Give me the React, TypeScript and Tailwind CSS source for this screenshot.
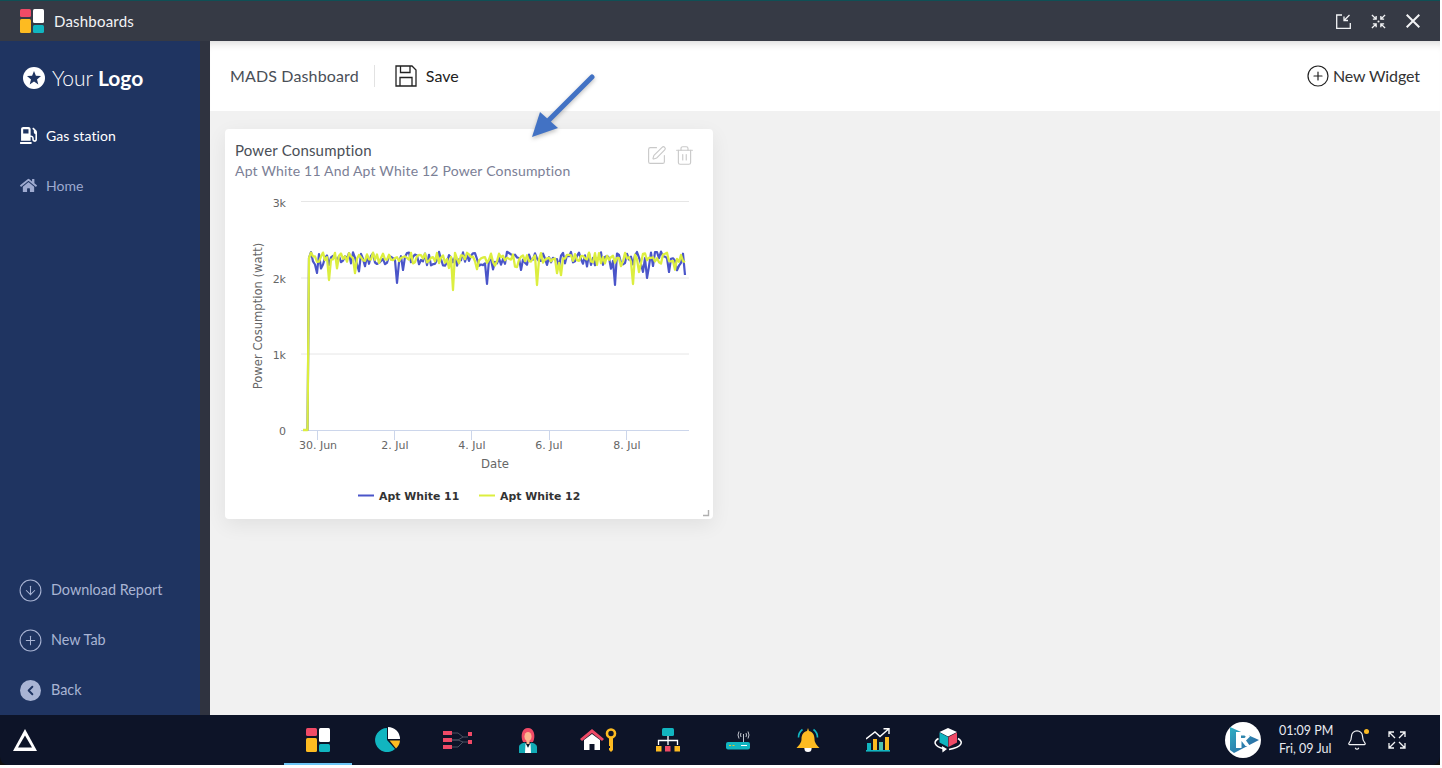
import React from 'react';
import { CircleArrowDown, CirclePlus, ChevronLeft, SquarePen, Trash2, Bell } from 'lucide-react';
import { FaGasPump, FaHome } from 'react-icons/fa';

// seeded noise so the series stay the same on every load
const makeSeries = (seed: number, base: number, spread: number, dips: number[][]) => {
    let s = seed;
    const rnd = () => {
        s = (s * 16807) % 2147483647;
        return s / 2147483647;
    };
    const pts: number[][] = [[303, 430], [307.5, 430], [309, 258]];
    for (let x = 311; x < 686; x += 2) {
        let y = base + (rnd() - 0.5) * spread;
        if (rnd() > 0.86) y += rnd() * 10;
        for (const d of dips) {
            if (d[0] - x >= 0 && d[0] - x < 2) y = d[1];
        }
        pts.push([x, y]);
    }
    return pts.map((p) => p[0].toFixed(1) + ',' + p[1].toFixed(1)).join(' ');
};

const blue = makeSeries(4711, 259, 15, [[317, 273], [398, 283], [404, 270], [488, 284], [616, 285], [647, 278], [685, 275], [521, 270], [669, 272]]);
const yellow = makeSeries(911, 258, 11, [[330, 280], [355, 273], [454, 290], [537, 285], [561, 275], [633, 284], [450, 268], [640, 272]]);

const DashIcon = () => (
    <svg width="24" height="24" viewBox="0 0 24 24">
        <rect x="0" y="0" width="11" height="8" rx="1.5" fill="#ef4a66" />
        <rect x="0" y="10" width="11" height="14" rx="1.5" fill="#fdbb21" />
        <rect x="13" y="0" width="11" height="14" rx="1.5" fill="#ffffff" />
        <rect x="13" y="16" width="11" height="8" rx="1.5" fill="#11b5c0" />
    </svg>
);

const PieIcon = () => (
    <svg width="26" height="26" viewBox="0 0 26 26">
        <path d="M12 1 A12 12 0 1 0 20 22 L12 13 Z" fill="#11b5c0" />
        <path d="M13 0 A12 12 0 0 1 25 12 L13 12 Z" fill="#ffffff" />
        <path d="M14.5 13.5 L25 13.5 A12 12 0 0 1 21 21.5 Z" fill="#fdbb21" />
    </svg>
);

const FlowIcon = () => (
    <svg width="30" height="18" viewBox="0 0 30 18">
        <path d="M9 2 H15 L20 6 H25 M9 9 H15 L20 6 M9 9 H15 L20 11 H25 M9 16 H15 L20 11" fill="none" stroke="#4b5060" strokeWidth="1" />
        <rect x="0" y="0" width="9" height="4" fill="#ef4a66" />
        <rect x="0" y="7" width="9" height="4" fill="#ef4a66" />
        <rect x="0" y="14" width="9" height="4" fill="#ef4a66" />
        <rect x="25" y="1" width="4" height="4" fill="#ef4a66" />
        <rect x="25" y="9" width="4" height="4" fill="#ef4a66" />
    </svg>
);

const PersonIcon = () => (
    <svg width="18" height="25" viewBox="0 0 18 25">
        <path d="M4 14 C1 8 3 0 9 0 C15 0 17 8 14 14 Z" fill="#ef4a66" />
        <ellipse cx="9" cy="8.5" rx="3.6" ry="4.6" fill="#fbb58f" />
        <rect x="7.5" y="11" width="3" height="5" fill="#fbb58f" />
        <path d="M0 25 V19 C0 16 4 15 6 14.5 L9 20 L12 14.5 C14 15 18 16 18 19 V25 Z" fill="#11aab5" />
        <path d="M6.5 15 L9 20 L11.5 15 L12 25 H6 Z" fill="#ffffff" />
    </svg>
);

const HouseKeyIcon = () => (
    <svg width="37" height="24" viewBox="0 0 37 24">
        <path d="M0 11 L12 1 L24 11 L22 13 L12 5 L2 13 Z" fill="#ef4a66" />
        <path d="M4 12 L12 6 L20 12 V22 H14.5 V16 H9.5 V22 H4 Z" fill="#ffffff" />
        <path d="M33 9 V22 L31 24 L29 22 V20 H30 V18 H29 V9 Z" fill="#fdbb21" />
        <circle cx="31" cy="5.5" r="4" fill="none" stroke="#fdbb21" strokeWidth="2.6" />
    </svg>
);

const TreeIcon = () => (
    <svg width="24" height="24" viewBox="0 0 24 24">
        <rect x="6" y="0" width="12" height="8" rx="1.5" fill="#11b5c0" />
        <path d="M12 8 V12 M2.5 17 V12.5 H21.5 V17 M12 12 V17" fill="none" stroke="#ffffff" strokeWidth="1.3" />
        <rect x="0" y="18" width="5.5" height="5.5" fill="#fdbb21" />
        <rect x="9" y="18" width="5.5" height="5.5" fill="#ef4a66" />
        <rect x="18.5" y="18" width="5.5" height="5.5" fill="#fdbb21" />
    </svg>
);

const RouterIcon = () => (
    <svg width="24" height="19" viewBox="0 0 24 19">
        <path d="M17.5 3 V11 M13 0.5 Q11 4 13 7.5 M15 2 Q14 4 15 6 M20 2 Q21 4 20 6 M22 0.5 Q24 4 22 7.5" fill="none" stroke="#d5d8e0" strokeWidth="0.9" />
        <rect x="0" y="11" width="24" height="7.5" rx="2" fill="#11b5c0" />
        <rect x="3" y="14" width="2" height="1" fill="#fdbb21" />
        <rect x="6.5" y="14" width="2" height="1" fill="#fdbb21" />
        <rect x="15" y="14" width="6" height="1" fill="#ffffff" />
    </svg>
);

const BellColorIcon = () => (
    <svg width="24" height="25" viewBox="0 0 24 25">
        <circle cx="12" cy="20.5" r="3.6" fill="#ffffff" />
        <path d="M12 0 L13 3 C17.5 4 18.5 8 18.5 11 C18.5 15 21 17 23.5 20 H0.5 C3 17 5.5 15 5.5 11 C5.5 8 6.5 4 11 3 Z" fill="#fdbb21" />
        <path d="M2.5 9.5 Q2.5 4.5 6.5 1.5 M21.5 9.5 Q21.5 4.5 17.5 1.5" fill="none" stroke="#11b5c0" strokeWidth="1.6" />
    </svg>
);

const ChartIcon = () => (
    <svg width="24" height="24" viewBox="0 0 24 24">
        <path d="M0 11 L9 4 L14 8.5 L22 1.5 M17.5 0.7 H23 V6" fill="none" stroke="#ffffff" strokeWidth="1.4" />
        <rect x="1" y="15" width="4" height="7" fill="#11b5c0" />
        <rect x="7" y="11" width="4" height="11" fill="#fdbb21" />
        <rect x="13" y="14" width="4" height="8" fill="#4fc3b0" />
        <rect x="19" y="9" width="4" height="13" fill="#fdbb21" />
        <rect x="0" y="22" width="24" height="1.6" fill="#11b5c0" />
    </svg>
);

const CubeIcon = () => (
    <svg width="29" height="25" viewBox="0 0 29 25">
        <path d="M14 0 L23 4 L14 8.5 L5.5 4 Z" fill="#ffffff" />
        <path d="M5.5 4.5 L14 9 V19 L5.5 14.5 Z" fill="#11b5c0" />
        <path d="M23 4.5 L14.5 9 V19 L23 14.5 Z" fill="#ef4a66" />
        <path d="M4.5 10.5 C-1 13.5 0 18 9 20.5 M24 10.5 C30 14 28 19 15 21.5" fill="none" stroke="#ffffff" strokeWidth="1.5" />
        <path d="M8 18 L13 21 L8.5 24.5 Z" fill="#ffffff" />
    </svg>
);

const dockIcons = [
    <DashIcon key="a" />,
    <PieIcon key="b" />,
    <FlowIcon key="c" />,
    <PersonIcon key="d" />,
    <HouseKeyIcon key="e" />,
    <TreeIcon key="f" />,
    <RouterIcon key="g" />,
    <BellColorIcon key="h" />,
    <ChartIcon key="i" />,
    <CubeIcon key="j" />,
];

const Chart = () => (
    <svg width="488" height="340" viewBox="225 179 488 340" className="block">
        {[201.5, 278, 354].map((y) => (
            <line key={y} x1="301" x2="689" y1={y} y2={y} stroke="#e6e6e6" />
        ))}
        <line x1="301" x2="689" y1="430.5" y2="430.5" stroke="#ccd6eb" />
        {[317.5, 394.5, 471.5, 549.5, 626.5].map((x) => (
            <line key={x} x1={x} x2={x} y1="431" y2="440" stroke="#ccd6eb" />
        ))}
        <polyline points={blue} fill="none" stroke="#4a55c9" strokeWidth="2.2" strokeLinejoin="round" />
        <polyline points={yellow} fill="none" stroke="#dcee3f" strokeWidth="2.3" strokeLinejoin="round" />
        <g fontFamily="'DejaVu Sans', sans-serif" fontSize="11" fill="#666666">
            <text x="286" y="206.5" textAnchor="end">3k</text>
            <text x="286" y="283" textAnchor="end">2k</text>
            <text x="286" y="359" textAnchor="end">1k</text>
            <text x="286" y="435" textAnchor="end">0</text>
            <text x="318" y="449" textAnchor="middle">30. Jun</text>
            <text x="395" y="449" textAnchor="middle">2. Jul</text>
            <text x="472" y="449" textAnchor="middle">4. Jul</text>
            <text x="549" y="449" textAnchor="middle">6. Jul</text>
            <text x="627" y="449" textAnchor="middle">8. Jul</text>
            <text x="495" y="468" textAnchor="middle" fontSize="11.7">Date</text>
            <text transform="translate(262 316) rotate(-90)" textAnchor="middle" fontSize="11.6">Power Cosumption (watt)</text>
        </g>
        <line x1="358" x2="374" y1="495.5" y2="495.5" stroke="#4a55c9" strokeWidth="2" />
        <line x1="479" x2="495" y1="495.5" y2="495.5" stroke="#dcee3f" strokeWidth="2" />
        <g fontFamily="'DejaVu Sans', sans-serif" fontSize="10.9" fontWeight="700" fill="#333333">
            <text x="379" y="499.5">Apt White 11</text>
            <text x="500" y="499.5">Apt White 12</text>
        </g>
        <path d="M703 515.5 H708.5 V510" fill="none" stroke="#b0b0b0" strokeWidth="1.4" />
    </svg>
);

const App = () => {
    return (
        <div className="w-[1440px] h-[765px] bg-white flex flex-col overflow-hidden relative font-['Lato','Noto_Sans',sans-serif]">
            <div className="h-px bg-[#0f4f55]" />
            <div className="h-10 bg-[#363a45] flex items-center pl-5 pr-5 text-white">
                <DashIcon />
                <span className="ml-[10px] text-[15px] tracking-[0.2px] text-[#f2f3f5]">Dashboards</span>
                <div className="ml-auto flex items-center gap-5">
                    <svg width="15" height="15" viewBox="0 0 15 15" fill="none" stroke="#f2f3f5" strokeWidth="1.3">
                        <path d="M6 1 H0.7 V14.3 H14.3 V9" />
                        <path d="M13.5 1 L8 6.5 M8 2.5 V6.5 H12" />
                    </svg>
                    <svg width="15" height="15" viewBox="0 0 16 16" fill="none" stroke="#f2f3f5" strokeWidth="1.4">
                        <path d="M1 1 L5.5 5.5 M5.5 2 V5.5 H2 M15 1 L10.5 5.5 M10.5 2 V5.5 H14 M1 15 L5.5 10.5 M5.5 14 V10.5 H2 M15 15 L10.5 10.5 M10.5 14 V10.5 H14" />
                        <circle cx="8" cy="8" r="1.1" fill="#f2f3f5" stroke="none" />
                    </svg>
                    <svg width="14" height="14" viewBox="0 0 14 14" fill="none" stroke="#f2f3f5" strokeWidth="2">
                        <path d="M0.7 0.7 L13.3 13.3 M13.3 0.7 L0.7 13.3" />
                    </svg>
                </div>
            </div>

            <div className="h-[674px] flex">
                <aside className="w-[200px] bg-[#1f3461] flex flex-col pl-5">
                    <div className="flex items-center h-6 mt-[25px] ml-[3px]">
                        <svg width="22" height="22" viewBox="0 0 22 22">
                            <circle cx="11" cy="11" r="11" fill="#ffffff" />
                            <path d="M11 4 L12.9 8.8 L18 9.1 L14 12.4 L15.3 17.4 L11 14.6 L6.7 17.4 L8 12.4 L4 9.1 L9.1 8.8 Z" fill="#1f3461" />
                        </svg>
                        <span className="ml-[7px] text-[21px] text-white font-light">Your</span>
                        <span className="ml-[5px] text-[21px] text-white font-bold">Logo</span>
                    </div>
                    <div className="flex items-center mt-[35px] h-5 text-white text-[14px] tracking-[0.1px]">
                        <FaGasPump size={17} />
                        <span className="ml-[9px]">Gas station</span>
                    </div>
                    <div className="flex items-center mt-[30px] h-5 text-[#9eaad0] text-[14px]">
                        <FaHome size={17} />
                        <span className="ml-[9px]">Home</span>
                    </div>
                    <div className="mt-auto flex flex-col gap-[30px] pb-[15px] text-[#a9b4d4] text-[14.4px]">
                        <div className="flex items-center h-5">
                            <CircleArrowDown size={25} strokeWidth={1} className="-ml-[2px]" />
                            <span className="ml-2">Download Report</span>
                        </div>
                        <div className="flex items-center h-5">
                            <CirclePlus size={25} strokeWidth={1} className="-ml-[2px]" />
                            <span className="ml-2">New Tab</span>
                        </div>
                        <div className="flex items-center h-5">
                            <div className="w-[21px] h-[21px] rounded-full bg-[#a9b4d4] flex items-center justify-center">
                                <ChevronLeft size={15} color="#1f3461" strokeWidth={3} />
                            </div>
                            <span className="ml-[10px]">Back</span>
                        </div>
                    </div>
                </aside>
                <div className="w-[10px] bg-[#2f3340]" />
                <main className="flex-1 bg-[#f1f1f1] flex flex-col">
                    <header className="h-[70px] bg-white flex items-center pl-5 pr-5 text-[#222] shadow-[inset_0_9px_8px_-7px_rgba(0,0,0,0.16)]">
                        <span className="text-[16px] tracking-[0.14px] text-[#4a4f57]">MADS Dashboard</span>
                        <div className="w-px h-[22px] bg-[#e2e2e2] ml-[15px]" />
                        <svg width="22" height="22" viewBox="0 0 22 22" fill="none" stroke="#222222" strokeWidth="1.3" className="ml-5">
                            <path d="M1 1 H17 L21 5 V21 H1 Z" />
                            <path d="M5.5 1 V7.5 H15 V1 M5 21 V12.5 H17 V21" />
                        </svg>
                        <span className="ml-[9px] text-[16px]">Save</span>
                        <CirclePlus size={24} strokeWidth={1.2} className="ml-auto" />
                        <span className="ml-[3px] text-[16px] -tracking-[0.1px] text-[#333]">New Widget</span>
                    </header>
                    <div className="pt-[18px] pl-[15px]">
                        <div className="w-[488px] h-[390px] bg-white rounded-[4px] shadow-[0_6px_20px_rgba(0,0,0,0.07)]">
                            <div className="h-[50px] pt-[11px] px-[10px] relative">
                                <div className="text-[15px] leading-[20px] tracking-[0.18px] text-[#4a4f57]">Power Consumption</div>
                                <div className="text-[14px] leading-[20px] tracking-[0.19px] mt-[1px] text-[#7b8096]">Apt White 11 And Apt White 12 Power Consumption</div>
                                <div className="absolute top-4 right-[18px] flex gap-[7px] text-[#c9c9c9]">
                                    <SquarePen size={21} strokeWidth={1.3} />
                                    <Trash2 size={21} strokeWidth={1.3} />
                                </div>
                            </div>
                            <Chart />
                        </div>
                    </div>
                </main>
            </div>

            <div className="h-[50px] bg-[#111111]">
                <div className="h-full bg-[#0d1428] flex items-center rounded-b-[8px] text-white">
                    <div className="w-[283px] pl-[13px] flex items-center">
                        <svg width="24" height="22" viewBox="0 0 24 22">
                            <path d="M12 0 L24 22 H0 Z" fill="#ffffff" />
                            <path d="M12 6.5 L19 18.5 H5 Z" fill="#0d1428" />
                        </svg>
                    </div>
                    <div className="flex h-full">
                        {dockIcons.map((icon, i) => (
                            <div key={i} className="w-[70px] h-full flex items-center justify-center relative">
                                {icon}
                                {i === 0 && <div className="absolute bottom-0 left-px right-px h-[2px] bg-[#6cc5f5]" />}
                            </div>
                        ))}
                    </div>
                    <div className="ml-auto flex items-center pr-[34px]">
                        <svg width="36" height="36" viewBox="0 0 36 36">
                            <defs>
                                <linearGradient id="brand" x1="0" y1="0" x2="1" y2="1">
                                    <stop offset="0" stopColor="#2fb0c4" />
                                    <stop offset="1" stopColor="#2a5a9c" />
                                </linearGradient>
                            </defs>
                            <circle cx="18" cy="18" r="18" fill="#ffffff" />
                            <path d="M5 5 L34 18 L9 31 L5 28 Z" fill="url(#brand)" />
                            <path d="M11 10 H21 L25 14.5 L21 18.5 L25 24 H20.5 L16.5 19 V26 H11 Z" fill="#ffffff" />
                            <path d="M16 13.5 H19.5 L20.8 14.8 L19.5 16 H16 Z" fill="#2f86ad" />
                        </svg>
                        <div className="ml-[18px] w-[62px] text-[12.5px] leading-[18px] text-[#e8eaf0]">
                            <div>01:09 PM</div>
                            <div>Fri, 09 Jul</div>
                        </div>
                        <div className="relative ml-[5px]">
                            <Bell size={22} strokeWidth={1.3} className="text-[#f2f3f5]" />
                            <div className="absolute top-0 -right-[1px] w-[5px] h-[5px] rounded-full bg-[#fdbb21]" />
                        </div>
                        <svg width="18" height="18" viewBox="0 0 18 18" fill="none" stroke="#f2f3f5" strokeWidth="1.3" className="ml-5">
                            <path d="M1 6 V1 H6 M1 1 L7 7 M12 1 H17 V6 M17 1 L11 7 M1 12 V17 H6 M1 17 L7 11 M12 17 H17 V12 M17 17 L11 11" />
                        </svg>
                    </div>
                </div>
            </div>

            {/* annotation arrow on top of the screenshot */}
            <svg width="80" height="80" viewBox="0 0 80 80" className="absolute left-[525px] top-[68px] pointer-events-none drop-shadow-[0_2px_2px_rgba(0,0,0,0.25)]">
                <path d="M67 9 L24 52" stroke="#4272c4" strokeWidth="5" strokeLinecap="round" />
                <path d="M7 69 L15 44 L33 60 Z" fill="#4272c4" />
            </svg>
        </div>
    );
};

export default App;
